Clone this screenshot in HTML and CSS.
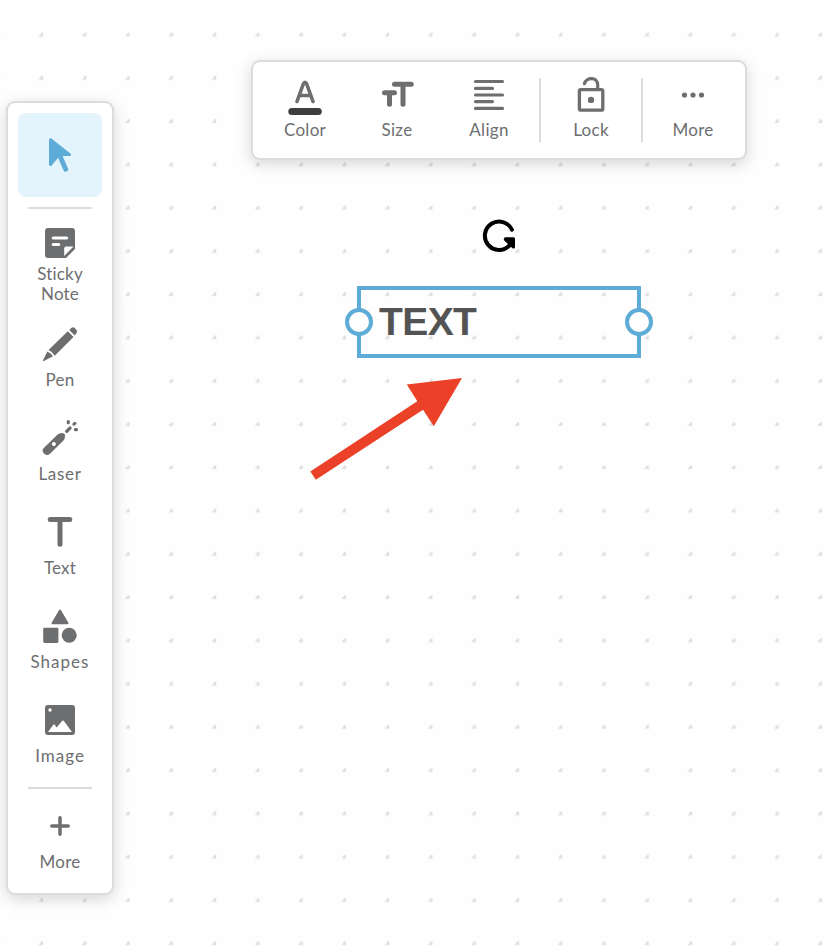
FILE: index.html
```html
<!DOCTYPE html>
<html lang="en">
<head>
<meta charset="utf-8">
<title>Whiteboard</title>
<link rel="stylesheet" href="styles.css">
</head>
<body>
<main class="board">
  <svg class="grid" width="834" height="946" aria-hidden="true">
    <defs>
      <pattern id="dots" x="38" y="31.5" width="43.27" height="43.27" patternUnits="userSpaceOnUse">
        <path d="M1.200 4.700 3.600 1.500H4.800V4.700Z" fill="#dedede" stroke="#dedede" stroke-opacity=".6" stroke-width="1" stroke-linejoin="round"/>
      </pattern>
    </defs>
    <rect width="834" height="946" fill="url(#dots)"/>
  </svg>

  <nav class="sidebar">
    <button class="tool tool-active" aria-label="Select">
      <svg width="84" height="84" viewBox="18 113 84 84"><path d="M50.500 139.800 69.500 154.600H58.800L50.500 164.500Z" fill="#5dabd7" stroke="#5dabd7" stroke-width="3" stroke-linejoin="round"/><path d="M60 156 65.700 169.300" fill="none" stroke="#5dabd7" stroke-width="4.800" stroke-linecap="round"/></svg>
    </button>
    <hr class="rule">
    <button class="tool tool-note">
      <svg width="36" height="36" viewBox="42 225 36 36"><path fill="#6d6e70" d="M48 228H72Q75 228 75 231V249L66 258H48Q45 258 45 255V231Q45 228 48 228Z"/><path d="M64.200 256V248.500Q64.200 246.500 66.200 246.500H73.500Z" fill="#fff"/><path d="M53.300 238H66.600M53.300 244.500H58.700" fill="none" stroke="#fff" stroke-width="3.200" stroke-linecap="round"/></svg>
      <span>Sticky<br>Note</span>
    </button>
    <button class="tool">
      <svg width="36" height="36" viewBox="42 326 36 36"><g fill="#6d6e70"><path d="M67.800 331.300 73.500 337.100 54.700 355.700Q52.500 351.500 48.500 349.900Z"/><path d="M69.300 330 71.500 327.800Q73 326.500 74.500 327.800L76.500 330Q77.800 331.500 76.500 333L74.700 335.500Z"/><path d="M47.300 351.500Q51 353 52.700 356.500L43.800 361Q42.500 361.500 43 360.200Z"/></g></svg>
      <span>Pen</span>
    </button>
    <button class="tool">
      <svg width="36" height="36" viewBox="42 420 36 36"><path fill="#6d6e70" fill-rule="evenodd" d="M57.600 434.500Q59.500 432.700 62.500 433Q65.600 433.500 65 436.500Q65 439.500 63 441L50 453.700Q47.500 456 44.500 454Q41 450.800 43.800 448ZM53.900 441.900a2 2 0 1 0 .01 0Z"/><path d="M66.700 431.300 70 428M68.300 421.600V422.700M74 424.100 74.800 423.400M75.300 429.600H76.500" fill="none" stroke="#6d6e70" stroke-width="3.200" stroke-linecap="round"/></svg>
      <span class="label-wide">Laser</span>
    </button>
    <button class="tool">
      <svg width="36" height="36" viewBox="42 514 36 36"><path d="M50.200 519.500H69.800M60 519.500V544.300" fill="none" stroke="#6d6e70" stroke-width="5" stroke-linecap="round"/></svg>
      <span>Text</span>
    </button>
    <button class="tool">
      <svg width="36" height="36" viewBox="42 608 36 36"><g fill="#6d6e70"><path d="M60 610.500 67.500 623.200H52.500Z" stroke="#6d6e70" stroke-width="2" stroke-linejoin="round"/><rect x="43.200" y="627.700" width="15.200" height="15.200" rx="1.300"/><circle cx="69.200" cy="635.300" r="7.500"/></g></svg>
      <span class="label-wider">Shapes</span>
    </button>
    <button class="tool">
      <svg width="36" height="36" viewBox="42 702 36 36"><rect x="45" y="705" width="30" height="30" rx="3" fill="#6d6e70"/><circle cx="50" cy="710" r="1.700" fill="#fff"/><path d="M48 732 53.300 724.700Q54 724 54.700 724.700L56.700 727.500 62.300 720.800Q63 720 63.700 720.800L72 732Z" fill="#fff"/></svg>
      <span class="label-wider">Image</span>
    </button>
    <hr class="rule rule-bottom">
    <button class="tool tool-more">
      <svg width="36" height="36" viewBox="42 808 36 36"><path d="M51.800 826H68.200M60 817.800V834.200" fill="none" stroke="#6d6e70" stroke-width="3.500" stroke-linecap="round"/></svg>
      <span>More</span>
    </button>
  </nav>

  <section class="toolbar">
    <button class="action">
      <svg width="40" height="40" viewBox="285 77 40 40"><path d="M297 101.500 303.300 84Q305 80.600 306.700 84L313 101.500M299.500 95.500H310.500" fill="none" stroke="#6d6e70" stroke-width="3.600" stroke-linecap="round" stroke-linejoin="round"/><rect x="288.300" y="108" width="33.500" height="7" rx="3.500" fill="#3e3e3f"/></svg>
      <span>Color</span>
    </button>
    <button class="action">
      <svg width="40" height="40" viewBox="377 77 40 40"><path d="M394.500 84.200H411.300M403 84.200V104.300M384.500 92.700H394.500M389.500 92.700V104.300" fill="none" stroke="#6d6e70" stroke-width="5" stroke-linecap="round"/></svg>
      <span>Size</span>
    </button>
    <button class="action">
      <svg width="40" height="40" viewBox="469 77 40 40"><path d="M475.500 81.500H502.500M475.500 88.400H492.500M475.500 95H502.500M475.500 101.600H492.500M475.500 108.400H502.500" fill="none" stroke="#6d6e70" stroke-width="3.200" stroke-linecap="round"/></svg>
      <span>Align</span>
    </button>
    <i class="divider"></i>
    <button class="action">
      <svg width="40" height="40" viewBox="571 77 40 40"><rect x="579.400" y="89.600" width="23.400" height="20.600" rx="1.500" fill="none" stroke="#6d6e70" stroke-width="3.300"/><path d="M584.500 83.700C586 76.900 597.700 76.500 597.700 85V89" fill="none" stroke="#6d6e70" stroke-width="3.200" stroke-linecap="round"/><circle cx="591" cy="99.900" r="3.200" fill="#6d6e70"/></svg>
      <span>Lock</span>
    </button>
    <i class="divider"></i>
    <button class="action">
      <svg width="40" height="40" viewBox="673 77 40 40" fill="#6d6e70"><circle cx="684.500" cy="95" r="2.600"/><circle cx="693" cy="95" r="2.600"/><circle cx="701.500" cy="95" r="2.600"/></svg>
      <span>More</span>
    </button>
  </section>

  <svg class="rotate" width="36" height="36" viewBox="481 218 36 36"><path d="M511.900 229.600A14.200 14.200 0 1 0 509.500 245.400" fill="none" stroke="#000" stroke-width="4" stroke-linecap="round"/><path d="M505.500 238.800H513.500V247L510.500 244.500 505.300 239.500Z" stroke="#000" stroke-width="3" stroke-linejoin="round"/></svg>

  <div class="text-node">
    <span>TEXT</span>
    <i class="handle handle-left"></i>
    <i class="handle handle-right"></i>
  </div>

  <svg class="arrow" width="154" height="104" viewBox="309 377 154 104"><path d="M310.300 471.500 417.300 401.300 406.800 384.500 462 378 433.800 426.200 423 409.700 315.800 479.800Z" fill="#eb4128"/></svg>
</main>
</body>
</html>
```
FILE: styles.css
```css
* { box-sizing: border-box; }

body {
  margin: 0;
  background: #fefefe;
  font-family: Lato, "Open Sans", sans-serif;
  font-size: 17px;
  color: #6d6e70;
}

.board {
  position: relative;
  width: 834px;
  height: 946px;
  overflow: hidden;
}

svg { display: block; flex: none; }

.grid { position: absolute; inset: 0; }

button {
  margin: 0;
  padding: 0;
  border: 0;
  background: none;
  font: inherit;
  color: inherit;
}

.sidebar, .toolbar {
  position: absolute;
  display: flex;
  align-items: center;
  background: #fff;
  border: 2px solid #dcdcdc;
  border-radius: 9px;
  box-shadow: 0 4px 16px rgba(0, 0, 0, .16);
}

.sidebar {
  left: 6px;
  top: 101px;
  width: 108px;
  height: 794px;
  padding-top: 10px;
  flex-direction: column;
}

.tool {
  display: flex;
  flex: none;
  flex-direction: column;
  align-items: center;
  gap: 8px;
  width: 84px;
  height: 94px;
  line-height: 20px;
  letter-spacing: .2px;
}

.tool-active {
  height: 84px;
  border-radius: 8px;
  background: #e3f4fd;
}

.tool-note {
  height: 101px;
  gap: 3px;
}

.tool-more { height: 64px; }

.label-wide { letter-spacing: .7px; }
.label-wider { letter-spacing: 1px; }

.rule {
  flex: none;
  width: 64px;
  height: 2px;
  margin: 10px 0 16px;
  border: 0;
  background: #dcdcdc;
}

.rule-bottom { margin: -9px 0 19px; }

.toolbar {
  left: 251px;
  top: 60px;
  width: 496px;
  height: 100px;
  padding-left: 6px;
  align-items: flex-start;
}

.action {
  display: flex;
  flex-direction: column;
  align-items: center;
  gap: 3px;
  width: 92px;
  margin-top: 15px;
  line-height: 20px;
  letter-spacing: .3px;
}

.divider {
  width: 2px;
  height: 64px;
  margin: 16px 4px 0;
  background: #dcdcdc;
}

.rotate { position: absolute; left: 481px; top: 218px; }

.text-node {
  position: absolute;
  left: 357px;
  top: 286px;
  width: 284px;
  height: 72px;
  padding-left: 18px;
  border: 4px solid #5dabd7;
  font: bold 39px/64px "Liberation Sans", Arial, sans-serif;
  letter-spacing: -.6px;
  color: #535353;
}

.handle {
  position: absolute;
  top: 18px;
  width: 28px;
  height: 28px;
  border: 4px solid #5dabd7;
  border-radius: 50%;
  background: #fff;
}

.handle-left { left: -16px; }
.handle-right { right: -16px; }

.arrow { position: absolute; left: 309px; top: 377px; }
```
